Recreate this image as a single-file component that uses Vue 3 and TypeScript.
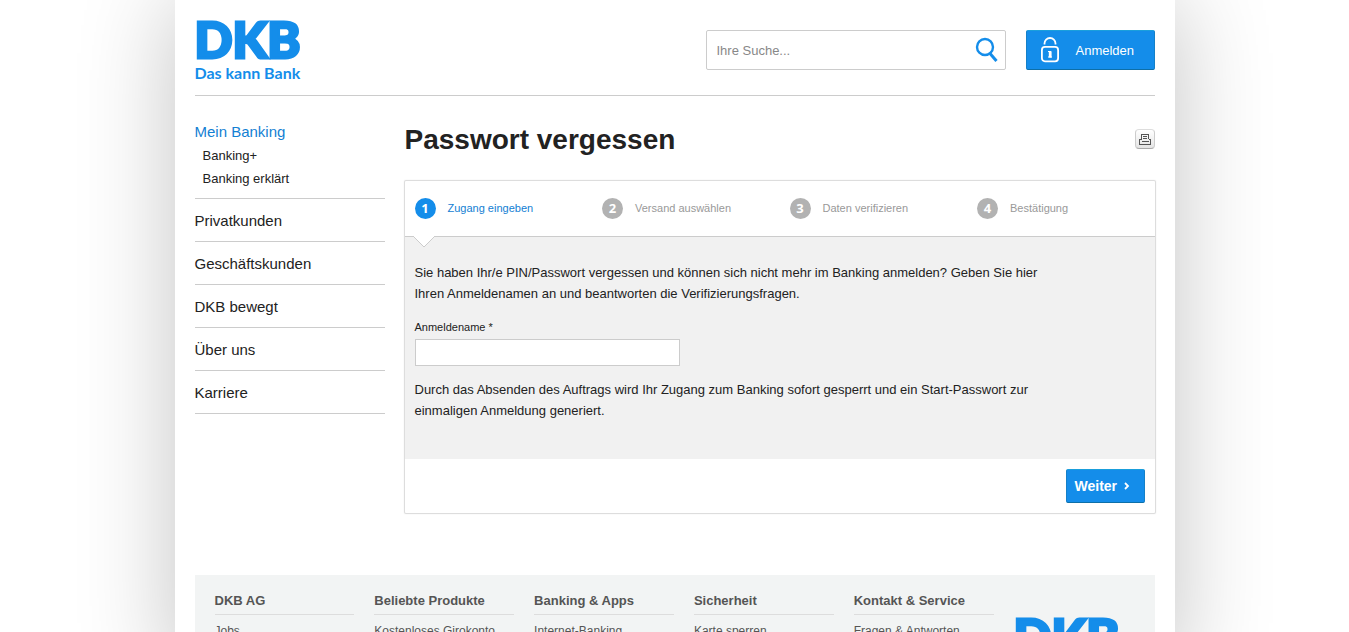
<script setup lang="ts">
import { ref } from 'vue'

interface Step {
  label: string
  active: boolean
}

interface FooterColumn {
  title: string
  link: string
}

const search = ref('')
const loginName = ref('')

const bankingLinks: string[] = ['Banking+', 'Banking erklärt']
const sections: string[] = ['Privatkunden', 'Geschäftskunden', 'DKB bewegt', 'Über uns', 'Karriere']

const steps: Step[] = [
  { label: 'Zugang eingeben', active: true },
  { label: 'Versand auswählen', active: false },
  { label: 'Daten verifizieren', active: false },
  { label: 'Bestätigung', active: false },
]

const footerColumns: FooterColumn[] = [
  { title: 'DKB AG', link: 'Jobs' },
  { title: 'Beliebte Produkte', link: 'Kostenloses Girokonto' },
  { title: 'Banking & Apps', link: 'Internet-Banking' },
  { title: 'Sicherheit', link: 'Karte sperren' },
  { title: 'Kontakt & Service', link: 'Fragen & Antworten' },
]
</script>

<template>
  <div class="page">
    <header class="header">
      <a href="#" class="logo">
        <span class="logo-name">DKB</span>
        <span class="logo-claim">Das kann Bank</span>
      </a>
      <div class="tools">
        <form class="search" role="search" @submit.prevent>
          <input v-model="search" type="text" placeholder="Ihre Suche..." aria-label="Ihre Suche" />
          <button type="submit" aria-label="Suchen">
            <svg width="24" height="26" viewBox="0 0 24 26" fill="none" stroke="#148dea">
              <circle cx="10" cy="10" r="8" stroke-width="2.4" />
              <path d="M14.8 16.3 L21.5 24" stroke-width="3" />
            </svg>
          </button>
        </form>
        <button type="button" class="login">
          <svg width="20" height="26" viewBox="0 0 20 26" fill="none" stroke="#fff" stroke-width="1.8">
            <path d="M4.5 7.5 V6.5 A5.5 5.5 0 0 1 15.5 6.5 V7.5" />
            <rect x="1.9" y="9.9" width="16.2" height="14.4" rx="3" />
            <path d="M8 14.5 H11 V20.5 M8 20 H12" stroke-width="1" />
            <path d="M10 14 V20.5" stroke-width="2.4" />
          </svg>
          <span>Anmelden</span>
        </button>
      </div>
    </header>

    <div class="body">
      <nav class="nav">
        <div class="nav-group">
          <a href="#" class="nav-main current">Mein Banking</a>
          <a v-for="item in bankingLinks" :key="item" href="#" class="nav-sub">{{ item }}</a>
        </div>
        <a v-for="item in sections" :key="item" href="#" class="nav-main nav-section">{{ item }}</a>
      </nav>

      <main class="main">
        <div class="title-row">
          <h1>Passwort vergessen</h1>
          <button type="button" class="print" aria-label="Drucken">
            <svg width="12" height="12" viewBox="0 0 12 12" fill="none" stroke="#555" shape-rendering="crispEdges">
              <path d="M2.5 6 V1.5 H9.5 V6" />
              <path d="M4 3.5 H8 M4 5.5 H8" />
              <path d="M2.5 6.5 H0.5 V11.5 H11.5 V6.5 H9.5 M3 7.5 V8.5 H9 V7.5" />
            </svg>
          </button>
        </div>

        <form class="card" @submit.prevent>
          <ol class="steps">
            <li v-for="(step, i) in steps" :key="step.label" :class="{ active: step.active }">
              <span class="number">{{ i + 1 }}</span>
              <span class="step-label">{{ step.label }}</span>
            </li>
          </ol>
          <div class="content">
            <svg class="pointer" width="22" height="12" viewBox="0 0 22 12">
              <path d="M0 0 L11 11 L22 0" fill="#fff" stroke="#ccc" />
            </svg>
            <p>
              Sie haben Ihr/e PIN/Passwort vergessen und können sich nicht mehr im Banking anmelden? Geben Sie hier
              Ihren Anmeldenamen an und beantworten die Verifizierungsfragen.
            </p>
            <div class="field">
              <label for="login-name">Anmeldename *</label>
              <input id="login-name" v-model="loginName" type="text" />
            </div>
            <p>
              Durch das Absenden des Auftrags wird Ihr Zugang zum Banking sofort gesperrt und ein Start-Passwort zur
              einmaligen Anmeldung generiert.
            </p>
          </div>
          <div class="actions">
            <button type="submit" class="next">
              <span>Weiter</span>
              <svg width="6" height="8" viewBox="0 0 6 8" fill="none" stroke="#fff" stroke-width="1.8">
                <path d="M1 1 L4 4 L1 7" />
              </svg>
            </button>
          </div>
        </form>
      </main>
    </div>

    <footer class="footer">
      <section v-for="column in footerColumns" :key="column.title" class="footer-column">
        <h2>{{ column.title }}</h2>
        <a href="#">{{ column.link }}</a>
      </section>
      <div class="footer-logo logo-name">DKB</div>
    </footer>
  </div>
</template>

<style>
body {
  margin: 0;
  background: #fff;
}
</style>

<style scoped>
.page {
  box-sizing: border-box;
  max-width: 1000px;
  margin: 0 auto;
  padding: 0 20px;
  background: #fff;
  box-shadow: 0 0 90px rgba(0, 0, 0, 0.24);
  color: #222;
  font-family: "Liberation Sans", Arial, sans-serif;
  font-size: 13px;
}

a {
  color: inherit;
  text-decoration: none;
}

button,
input {
  box-sizing: border-box;
  font-family: inherit;
}

button {
  padding: 0;
  cursor: pointer;
}

.header {
  display: flex;
  justify-content: space-between;
  align-items: flex-start;
  box-sizing: border-box;
  height: 96px;
  border-bottom: 1px solid #ccc;
}

.logo {
  display: flex;
  flex-direction: column;
  padding-top: 19px;
  color: #148dea;
}

.logo-name {
  color: #148dea;
  font-family: Lato, sans-serif;
  font-size: 50px;
  font-weight: 900;
  line-height: 40px;
  -webkit-text-stroke: 3px #148dea;
}

.logo-claim {
  font-family: Lato, sans-serif;
  font-size: 16px;
  font-weight: 700;
  line-height: 28px;
}

.tools {
  display: flex;
  gap: 20px;
  padding-top: 30px;
}

.search {
  display: flex;
  align-items: center;
  box-sizing: border-box;
  width: 300px;
  height: 40px;
  padding: 0 6px 0 10px;
  border: 1px solid #ccc;
  border-radius: 2px;
}

.search input {
  flex: 1;
  min-width: 0;
  padding: 0;
  border: 0;
  outline: 0;
  background: transparent;
  color: #222;
  font-size: 13px;
}

.search input::placeholder {
  color: #888;
  opacity: 1;
}

.search button {
  display: flex;
  border: 0;
  background: none;
}

.login,
.next {
  border: 1px solid;
  border-color: #1a9fdc #1580c8 #0d6fa8;
  border-radius: 2px;
  background: #148dea;
  color: #fff;
}

.login {
  display: flex;
  align-items: center;
  gap: 16px;
  width: 129px;
  height: 40px;
  padding: 0 13px;
  font-size: 13px;
}

.body {
  display: flex;
  gap: 20px;
  padding-bottom: 62px;
}

.nav {
  display: flex;
  flex-direction: column;
  flex: 0 0 190px;
  padding-top: 24px;
}

.nav-group {
  display: flex;
  flex-direction: column;
  padding-bottom: 8px;
  border-bottom: 1px solid #ccc;
}

.nav-main {
  font-size: 15px;
  line-height: 24px;
}

.nav-main.current {
  color: #1380d3;
}

.nav-sub {
  padding-left: 8px;
  line-height: 23px;
}

.nav-section {
  padding: 10px 0 8px;
  border-bottom: 1px solid #ccc;
}

.main {
  flex: 1;
  min-width: 0;
}

.title-row {
  display: flex;
  justify-content: space-between;
  align-items: center;
  height: 85px;
}

h1 {
  margin: 0;
  padding-top: 2px;
  font-size: 28px;
  line-height: 36px;
}

.print {
  display: flex;
  align-items: center;
  justify-content: center;
  width: 20px;
  height: 20px;
  border: 1px solid;
  border-color: #ddd #ccc #aaa;
  border-radius: 4px;
  background: linear-gradient(#fff, #e4e4e4);
}

.card {
  box-shadow: 0 0 0 1px #ddd, 0 0 2px 1px #eee;
  border-radius: 1px;
}

.steps {
  display: grid;
  grid-template-columns: repeat(4, 1fr);
  height: 55px;
  margin: 0;
  padding: 0;
  border-bottom: 1px solid #ccc;
  list-style: none;
}

.steps li {
  display: flex;
  align-items: center;
  gap: 12px;
  padding-left: 10px;
  color: #999;
  font-size: 11px;
}

.steps li.active {
  color: #1380d3;
}

.step-label {
  padding-bottom: 2px;
}

.number {
  width: 21px;
  border-radius: 50%;
  background: #b2b2b2;
  color: #fff;
  font-family: "Open Sans", sans-serif;
  font-size: 13px;
  font-weight: 700;
  line-height: 21px;
  text-align: center;
}

.active .number {
  background: #148dea;
}

.content {
  position: relative;
  padding: 25px 10px 38px;
  background: #f1f1f1;
}

.pointer {
  position: absolute;
  top: -1px;
  left: 8px;
}

.content p {
  max-width: 640px;
  margin: 0;
  line-height: 21px;
}

.field {
  display: flex;
  flex-direction: column;
  align-items: flex-start;
  gap: 4px;
  padding: 15px 0 13px;
}

.field label {
  font-size: 11px;
  line-height: 16px;
}

.field input {
  width: 265px;
  height: 27px;
  padding: 0 6px;
  border: 1px solid #ccc;
  background: #fff;
  font-size: 13px;
}

.actions {
  display: flex;
  justify-content: flex-end;
  padding: 10px;
}

.next {
  display: flex;
  align-items: center;
  gap: 7px;
  width: 79px;
  height: 34px;
  padding: 0 8px;
  font-size: 14px;
  font-weight: 700;
}

.footer {
  display: grid;
  grid-template-columns: repeat(5, 1fr) 121px;
  gap: 20px;
  padding: 16px 20px 20px;
  background: #f2f4f4;
  color: #555;
}

.footer-column h2 {
  margin: 0 0 6px;
  padding-bottom: 4px;
  border-bottom: 1px solid #ddd;
  font-size: 13px;
  line-height: 19px;
}

.footer-column a {
  font-size: 12px;
  line-height: 20px;
}

.footer-logo {
  padding-top: 25px;
}
</style>
